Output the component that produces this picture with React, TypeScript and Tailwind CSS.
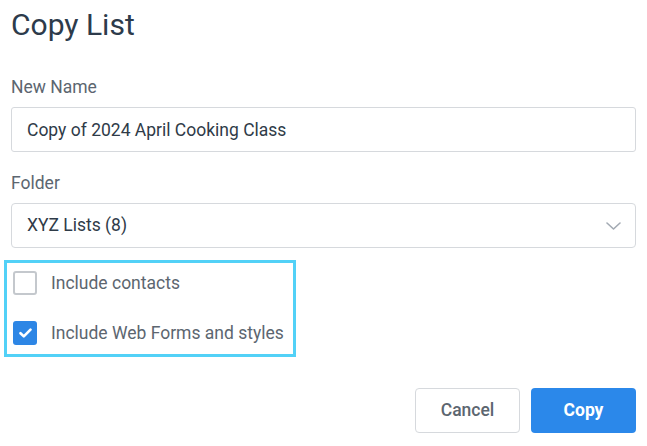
import React, { useState } from 'react';

const ChevronDown = () => (
  <svg width="15" height="8" viewBox="0 0 15 8" fill="none">
    <path d="M1 1l6.5 6 6.5-6" stroke="#a3aab3" strokeWidth="1.6" strokeLinecap="round" strokeLinejoin="round" />
  </svg>
);

const CheckBox = ({ checked, onChange }: { checked: boolean; onChange: () => void }) => (
  <button
    onClick={onChange}
    className={`w-6 h-6 shrink-0 rounded-[3px] flex items-center justify-center ${checked ? 'bg-[#2d86e5]' : 'bg-white border-2 border-[#c4c8cd]'}`}
  >
    {checked && (
      <svg width="13" height="10" viewBox="0 0 13 10" fill="none">
        <path d="M1.5 5.2l3.3 3.2L11.5 1.6" stroke="white" strokeWidth="2.6" strokeLinecap="round" strokeLinejoin="round" />
      </svg>
    )}
  </button>
);

export default function App() {
  const [contacts, setContacts] = useState(false);
  const [forms, setForms] = useState(true);

  return (
    <div className="w-[647px] h-[446px] bg-white px-[11px] pt-[5px] font-['Roboto',sans-serif] overflow-hidden">
      <h1 className="text-[30px] leading-[40px] text-[#2d3b4b] font-normal">Copy List</h1>

      {/* New Name */}
      <label className="block mt-[32px] text-[17.5px] leading-[20px] text-[#5c6670]">New Name</label>
      <input
        className="mt-[10px] w-full h-[45px] border border-[#d6d9dd] rounded-[3px] px-[15px] text-[17.5px] text-[#2f3b48] outline-none"
        defaultValue="Copy of 2024 April Cooking Class"
      />

      {/* Folder */}
      <label className="block mt-[21px] text-[17.5px] leading-[20px] text-[#5c6670]">Folder</label>
      <div className="mt-[10px] w-full h-[45px] border border-[#d6d9dd] rounded-[4px] pl-[15px] pr-[14px] flex items-center justify-between">
        <span className="text-[17.5px] text-[#2f3b48]">XYZ Lists (8)</span>
        <ChevronDown />
      </div>

      {/* Options */}
      <div className="mt-[12px] -ml-[7px] w-[292px] border-[3px] border-[#52d1f7] pl-[6px] pt-[8px] pb-[9px] flex flex-col gap-[26px]">
        <label className="flex items-center gap-[14px] cursor-pointer">
          <CheckBox checked={contacts} onChange={() => setContacts(!contacts)} />
          <span className="text-[17.5px] text-[#5c6670] leading-[24px]">Include contacts</span>
        </label>
        <label className="flex items-center gap-[14px] cursor-pointer">
          <CheckBox checked={forms} onChange={() => setForms(!forms)} />
          <span className="text-[17.5px] text-[#5c6670] leading-[24px]">Include Web Forms and styles</span>
        </label>
      </div>

      {/* Actions */}
      <div className="mt-[31px] flex justify-end gap-[11px]">
        <button className="w-[105px] h-[45px] rounded-[4px] border border-[#d6d9dd] bg-white text-[17.5px] font-medium text-[#5c6670]">
          Cancel
        </button>
        <button className="w-[105px] h-[45px] rounded-[4px] bg-[#2b88ea] text-[17.5px] font-bold text-white">
          Copy
        </button>
      </div>
    </div>
  );
}
